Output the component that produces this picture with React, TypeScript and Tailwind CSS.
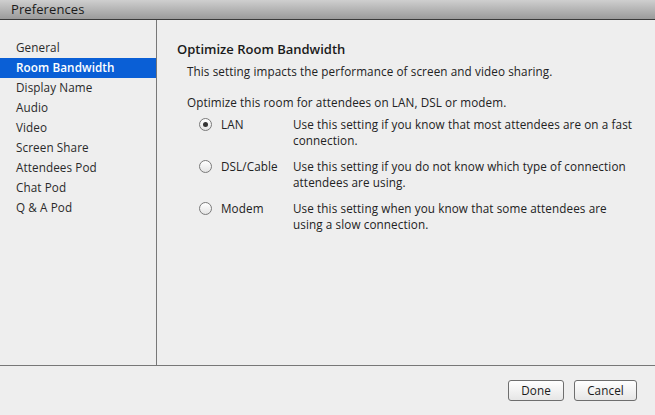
import React from 'react';

const items = [
  'General',
  'Room Bandwidth',
  'Display Name',
  'Audio',
  'Video',
  'Screen Share',
  'Attendees Pod',
  'Chat Pod',
  'Q & A Pod',
];

const options = [
  {
    label: 'LAN',
    checked: true,
    lines: ['Use this setting if you know that most attendees are on a fast', 'connection.'],
  },
  {
    label: 'DSL/Cable',
    checked: false,
    lines: ['Use this setting if you do not know which type of connection', 'attendees are using.'],
  },
  {
    label: 'Modem',
    checked: false,
    lines: ['Use this setting when you know that some attendees are', 'using a slow connection.'],
  },
];

const Radio = ({ checked }: { checked: boolean }) => (
  <div className="w-[13px] h-[13px] rounded-full border border-[#7a7a7a] bg-gradient-to-b from-white to-[#e4e4e4] flex items-center justify-center">
    {checked && <div className="w-[5px] h-[5px] rounded-full bg-[#333]" />}
  </div>
);

const App = () => {
  const selected = 'Room Bandwidth';

  return (
    <div className="w-[655px] h-[415px] flex flex-col bg-[#eeeeee] text-[11.7px] tracking-[0.1px] text-[#222] font-['Open_Sans',sans-serif] overflow-hidden">
      <div className="h-[20px] shrink-0 bg-gradient-to-b from-[#cfcfcf] to-[#9b9b9b] border-b border-[#3a3a3a] flex items-center pl-[11px]">
        <span className="text-[13px] text-[#1a1a1a]">Preferences</span>
      </div>

      <div className="h-[346px] shrink-0 flex border-b border-[#777]">
        <div className="w-[157px] shrink-0 border-r border-[#777] pt-[18px]">
          {items.map((item) => (
            <div
              key={item}
              className={
                item === selected
                  ? 'h-[20px] flex items-center pl-[16px] bg-[#0a5fd6] text-white font-semibold'
                  : 'h-[20px] flex items-center pl-[16px] text-[#2a2a2a]'
              }
            >
              {item}
            </div>
          ))}
        </div>

        <div className="flex-1 pl-[20px] pt-[19px]">
          <div className="text-[13px] font-semibold tracking-normal text-[#1a1a1a] leading-[20px]">Optimize Room Bandwidth</div>
          <div className="pl-[10px] mt-[4px] leading-[16px]">
            This setting impacts the performance of screen and video sharing.
          </div>
          <div className="pl-[10px] mt-[15px] leading-[16px]">
            Optimize this room for attendees on LAN, DSL or modem.
          </div>
          <div className="flex flex-col gap-[10px] mt-[6px]">
            {options.map((o) => (
              <div key={o.label} className="flex items-start leading-[16px]">
                <div className="w-[44px] pl-[22px] pt-[2px] shrink-0">
                  <Radio checked={o.checked} />
                </div>
                <div className="w-[72px] shrink-0">{o.label}</div>
                <div>
                  {o.lines.map((l) => (
                    <div key={l}>{l}</div>
                  ))}
                </div>
              </div>
            ))}
          </div>
        </div>
      </div>

      <div className="flex-1 flex items-start justify-end gap-[10px] pt-[14px] pr-[18px]">
        <button className="w-[56px] h-[21px] rounded-[3px] border border-[#6e6e6e] bg-gradient-to-b from-white to-[#e6e6e6] text-[11.7px] text-[#1a1a1a]">
          Done
        </button>
        <button className="w-[63px] h-[21px] rounded-[3px] border border-[#6e6e6e] bg-gradient-to-b from-white to-[#e6e6e6] text-[11.7px] text-[#1a1a1a]">
          Cancel
        </button>
      </div>
    </div>
  );
};

export default App;
